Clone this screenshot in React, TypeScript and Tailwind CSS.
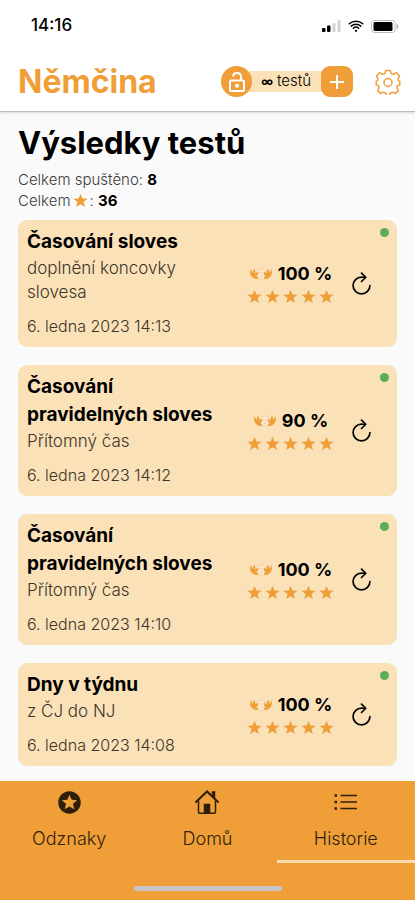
import { IoRefreshOutline, IoWifi } from "react-icons/io5";
import { MdStars } from "react-icons/md";

type TResult = {
  title: string;
  description: string;
  date: string;
  percent: number;
};

const results: TResult[] = [
  {
    title: "Časování sloves",
    description: "doplnění koncovky slovesa",
    date: "6. ledna 2023 14:13",
    percent: 100,
  },
  {
    title: "Časování pravidelných sloves",
    description: "Přítomný čas",
    date: "6. ledna 2023 14:12",
    percent: 90,
  },
  {
    title: "Časování pravidelných sloves",
    description: "Přítomný čas",
    date: "6. ledna 2023 14:10",
    percent: 100,
  },
  {
    title: "Dny v týdnu",
    description: "z ČJ do NJ",
    date: "6. ledna 2023 14:08",
    percent: 100,
  },
];

function Star({ className }: { className: string }) {
  return (
    <svg viewBox="0 0 24 24" className={className} fill="#f09e38" aria-hidden="true">
      <path d="M12 1l3 7.800 8.300.4-6.500 5.200 2.200 8.100-7-4.600-7 4.600 2.200-8.100L.7 9.200 9 8.800z" />
    </svg>
  );
}

function Laurel() {
  return (
    <svg viewBox="0 0 24 14" className="h-[14px] w-6" aria-hidden="true">
      <path d="M8.500 3Q12 1 15.500 3v6.500Q14 12.500 12 12.500T8.500 9.500z" fill="#fbe8cd" stroke="#f3c892" strokeWidth=".6" />
      <path d="M9.800 6h1.500M12.700 6h1.500M11 9h2" stroke="#efb673" strokeWidth=".7" />
      <g fill="#f09e38">
        <path d="M2 2C.6 4.500.8 8 3 10c2 1.800 4.300 2.300 6.200 2C9 10.500 8.200 9.600 7 9c1.600-.7 2.300-2.200 2-4C7.600 5.300 6.600 6 6.200 7 6.800 5 6.300 3.200 5 2 4 3 3.600 4.500 4 6 2.800 5 2.200 3.700 2 2z" />
        <path d="M22 2c1.400 2.500 1.200 6-1 8-2 1.800-4.300 2.300-6.200 2 .2-1.500 1-2.400 2.200-3-1.600-.7-2.300-2.200-2-4 1.400.3 2.400 1 2.800 2-.6-2-.1-3.800 1.200-5 1 1 1.400 2.500 1 4 1.200-1 1.800-2.300 2-4z" />
      </g>
    </svg>
  );
}

function UnlockIcon() {
  return (
    <svg viewBox="0 0 22 22" className="h-[22px] w-[22px]" fill="none" stroke="#fff" strokeWidth="2" aria-hidden="true">
      <rect x="4" y="9.500" width="14" height="10.500" rx="1" />
      <path d="M7 5.500C7.200 3.300 8.800 2 11 2c2.300 0 4 1.500 4 4v3.500" />
      <path d="M9.200 13h3.600v3.600H9.200z" fill="#fff" stroke="none" />
    </svg>
  );
}

function GearIcon() {
  return (
    <svg
      viewBox="0 0 26 26"
      className="h-[26px] w-[26px]"
      fill="none"
      stroke="currentColor"
      strokeWidth="1.500"
      strokeLinejoin="round"
      aria-hidden="true"
    >
      <path d="M10.700 1.500h4.600l.7 2.700c.9.900 1.900 1.200 3.100.8l2.400-1.300 3.100 3.200-1.400 2.400c-.2 1.200.1 2.100 1 2.900l.6.300v3.200l-2 .8c-.8.900-1 1.900-.6 3l1.200 2.100-2.900 2.900-2.300-1.200c-1.100-.3-2.100 0-2.800.9l-.7 2.300h-3.400l-.7-2.300c-.7-.9-1.700-1.200-2.800-.9l-2.300 1.200-2.900-2.900 1.200-2.100c.4-1.100.2-2.100-.6-3l-2-.8v-3.200l.6-.3c.9-.8 1.200-1.700 1-2.900L1.400 6.900l3.100-3.200L6.900 5c1.200.4 2.200.1 3.100-.8z" />
      <circle cx="13" cy="13.500" r="4" />
    </svg>
  );
}

function HomeIcon() {
  return (
    <svg viewBox="0 0 26 26" className="h-[26px] w-[26px]" fill="none" stroke="currentColor" strokeWidth="1.500" aria-hidden="true">
      <path d="M1.500 13.500L13 2.500l11.500 11" strokeWidth="2" />
      <path d="M4.500 11.500V23q0 1.200 1.200 1.200h14.600q1.200 0 1.200-1.200V11.500" />
      <path d="M18.500 7V3h2v6.500" fill="currentColor" />
      <path d="M10.500 15.500h5v8.500h-5z" fill="currentColor" />
    </svg>
  );
}

function ListIcon() {
  return (
    <svg viewBox="0 0 26 26" className="h-[26px] w-[26px]" stroke="currentColor" strokeWidth="2" aria-hidden="true">
      <path d="M1.500 6.500H4M1.500 13H4M1.500 19.500H4" strokeWidth="2.500" />
      <path d="M7.500 6.500H24M7.500 13H24M7.500 19.500H24" strokeWidth="1.700" />
    </svg>
  );
}

function StatusBar() {
  return (
    <div className="flex h-[52px] items-center justify-between pr-4 pl-[31px]">
      <span className="text-[17px] font-medium">14:16</span>
      <div className="flex items-center gap-[6px]">
        <svg viewBox="0 0 19 12" className="h-3 w-[19px]" aria-hidden="true">
          <rect x="0" y="8" width="3.500" height="4" rx="1" />
          <rect x="5" y="5.500" width="3.500" height="6.500" rx="1" />
          <rect x="10.500" y="3" width="3" height="9" rx="1" fill="#d4d4d4" />
          <rect x="15.500" y="0" width="3" height="12" rx="1" fill="#d4d4d4" />
        </svg>
        <IoWifi className="h-[18px] w-[18px]" />
        <svg viewBox="0 0 28 13" className="h-[13px] w-7" aria-hidden="true">
          <rect x=".5" y=".5" width="23.500" height="12" rx="3" fill="none" stroke="#bbb" />
          <rect x="2.500" y="2" width="19" height="9" rx="1.500" />
          <path d="M25.500 3.500q2 1 2 3t-2 3z" fill="#bbb" />
        </svg>
      </div>
    </div>
  );
}

function Header() {
  return (
    <header className="relative border-b border-[#bdbdbd] bg-white shadow-sm">
      <StatusBar />
      <div className="flex h-[59px] items-center justify-between pr-[14px] pl-[18px]">
        <span className="text-[32px] leading-9 font-bold text-[#f09e38]">Němčina</span>
        <div className="flex items-center gap-[22px]">
          <div className="flex items-center">
            <span className="z-10 flex h-[31px] w-[31px] items-center justify-center rounded-full bg-[#f09e38]">
              <UnlockIcon />
            </span>
            <span className="-mx-1 flex h-[21px] items-center gap-1 bg-[#fae1b8] pr-[14px] pl-[13px] text-[15px] font-light">
              <b className="text-xs font-bold">∞</b> testů
            </span>
            <button
              aria-label="Přidat testy"
              className="z-10 flex h-[31px] w-8 items-center justify-center rounded-[9px] bg-[#f09e38]"
            >
              <svg viewBox="0 0 14 14" className="h-[14px] w-[14px]" stroke="#fff" strokeWidth="2" aria-hidden="true">
                <path d="M7 0v14M0 7h14" />
              </svg>
            </button>
          </div>
          <button aria-label="Nastavení" className="text-[#f09e38]">
            <GearIcon />
          </button>
        </div>
      </div>
    </header>
  );
}

function ResultCard({ title, description, date, percent }: TResult) {
  return (
    <li className="relative flex items-center rounded-[9px] bg-[#fae1b8] pt-2 pr-[22px] pb-[9px] pl-[9px]">
      <div className="min-w-0 flex-1">
        <div className="w-[200px]">
          <h2 className="text-[19px] leading-7 font-bold">{title}</h2>
          <p className="w-44 text-[17px] leading-6 font-light text-[#3d3529]">{description}</p>
        </div>
        <p className="mt-[10px] text-base leading-6 font-light text-[#3d3529]">{date}</p>
      </div>
      <div className="flex flex-col items-center gap-[3px]">
        <div className="flex items-center gap-[5px]">
          <Laurel />
          <span className="text-lg leading-6 font-bold">{percent} %</span>
        </div>
        <div className="flex gap-[3px]">
          {[1, 2, 3, 4, 5].map((star) => (
            <Star key={star} className="h-[15px] w-[15px]" />
          ))}
        </div>
      </div>
      <button aria-label="Spustit znovu" className="ml-[14px]">
        <IoRefreshOutline className="h-[27px] w-[27px]" />
      </button>
      <span className="absolute top-2 right-2 h-[9px] w-[9px] rounded-full bg-[#5aad5b]" />
    </li>
  );
}

function BottomNav() {
  return (
    <nav className="bg-[#f09e38] text-[#2e1f0b]">
      <div className="grid h-[82px] grid-cols-3 text-lg font-light">
        <a href="#odznaky" className="flex flex-col items-center gap-3 border-b-[3px] border-transparent pt-2">
          <span className="flex h-[26px] items-center">
            <MdStars className="h-[27px] w-[27px]" />
          </span>
          <span className="leading-6">Odznaky</span>
        </a>
        <a href="#domu" className="flex flex-col items-center gap-3 border-b-[3px] border-transparent pt-2">
          <HomeIcon />
          <span className="leading-6">Domů</span>
        </a>
        <a href="#historie" className="flex flex-col items-center gap-3 border-b-[3px] border-[#fbdcae] pt-2">
          <ListIcon />
          <span className="leading-6">Historie</span>
        </a>
      </div>
      <div className="flex h-[37px] items-end justify-center pb-[9px]">
        <span className="h-[5px] w-[148px] rounded-full bg-[#c8c5c8]" />
      </div>
    </nav>
  );
}

export default function App() {
  return (
    <div className="flex min-h-screen flex-col bg-[#fafafa] font-['Inter',sans-serif] text-black">
      <Header />
      <main className="flex-1 px-[18px] pt-[13px] pb-[15px]">
        <h1 className="text-[31px] leading-9 font-bold">Výsledky testů</h1>
        <div className="mt-2 text-[15px] leading-[21px] font-light text-[#3a3a3a]">
          <p>
            Celkem spuštěno: <b className="font-bold text-black">8</b>
          </p>
          <p className="flex items-center">
            Celkem
            <Star className="mx-[2px] h-[15px] w-[15px]" />
            :&nbsp;<b className="font-bold text-black">36</b>
          </p>
        </div>
        <ul className="mt-[9px] flex flex-col gap-[18px]">
          {results.map((result) => (
            <ResultCard key={result.date} {...result} />
          ))}
        </ul>
      </main>
      <BottomNav />
    </div>
  );
}
